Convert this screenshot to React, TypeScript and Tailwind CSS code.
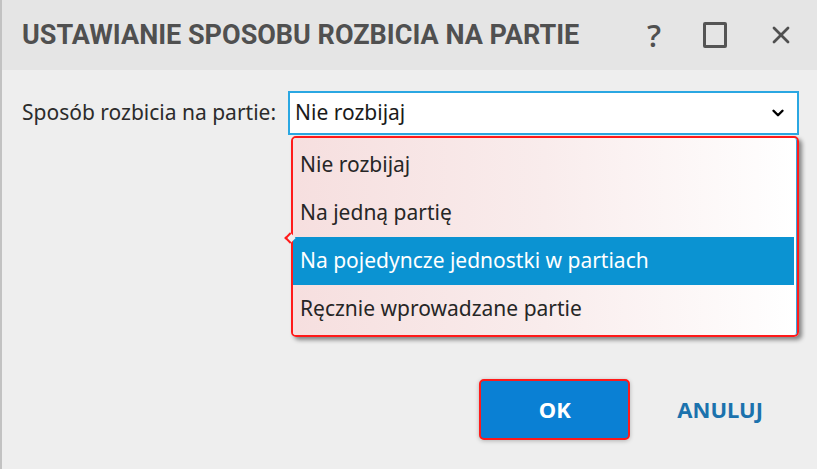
import { ChevronDown, X } from 'lucide-react';

const options = [
  'Nie rozbijaj',
  'Na jedną partię',
  'Na pojedyncze jednostki w partiach',
  'Ręcznie wprowadzane partie',
];

export default function App() {
  const selected = 2;

  return (
    <div
      className="w-[817px] h-[469px] bg-[#eeeeee] border-l-2 border-[#c2c2c2] flex flex-col overflow-hidden"
      style={{ fontFamily: '"Noto Sans", "Open Sans", sans-serif' }}
    >
      {/* Title bar */}
      <div className="h-[70px] bg-[#e5e5e5] flex items-center pl-[20px] pr-[22px] shrink-0">
        <h1
          className="flex-1 text-[27px] font-bold text-[#505050]"
          style={{ fontFamily: '"Roboto", sans-serif' }}
        >
          USTAWIANIE SPOSOBU ROZBICIA NA PARTIE
        </h1>
        <div className="flex items-center text-[#505050]">
          <span className="text-[31px] leading-none font-semibold w-[20px] text-center" style={{ fontFamily: '"Open Sans", sans-serif' }}>?</span>
          <div className="ml-[39px] w-[24px] h-[26px] border-[3px] border-[#555555] rounded-[2px]" />
          <X className="ml-[40px] w-[28px] h-[28px]" strokeWidth={2.4} />
        </div>
      </div>

      {/* Body */}
      <div className="flex-1 relative flex flex-col">
        <div className="flex items-center pl-[20px] pt-[21px]">
          <span className="text-[21px] text-[#2b2b2b] w-[266px]">Sposób rozbicia na partie:</span>
          <div className="w-[511px] h-[44px] bg-white border-2 border-[#2aa7e2] flex items-center pl-[5px] pr-[10px]">
            <span className="flex-1 text-[21px] text-[#1a1a1a]">Nie rozbijaj</span>
            <ChevronDown className="w-[18px] h-[18px] text-black" strokeWidth={3.2} />
          </div>
        </div>

        {/* Dropdown list */}
        <div className="absolute left-[289px] top-[66px] w-[508px] h-[201px] rounded-[5px] border-2 border-[#ff1a1a] shadow-[3px_3px_4px_rgba(0,0,0,0.45)]">
          <div className="absolute -left-[7px] top-[96px] w-[8px] h-[8px] border-l-2 border-b-2 border-[#ff1a1a] rotate-45 bg-[#eeeeee]" />
          <div className="h-full bg-gradient-to-r from-[#f6dfdf] via-[#f9ecec] to-white border-r border-[#3aa3dc] pt-[3px] rounded-[3px] overflow-hidden">
            {options.map((o, i) => (
              <div
                key={o}
                className={
                  i === selected
                    ? 'h-[48px] flex items-center pl-[7px] mr-[2px] bg-[#0b93d2] text-white text-[21px]'
                    : 'h-[48px] flex items-center pl-[7px] text-[#262626] text-[21px]'
                }
              >
                {o}
              </div>
            ))}
          </div>
        </div>

        {/* Buttons */}
        <div className="mt-auto flex items-center justify-end pr-[54px] pb-[29px]">
          <button className="w-[151px] h-[61px] bg-[#0a80d4] border-2 border-[#ff1a1a] rounded-[5px] text-white text-[22px] font-bold shadow-[0_1px_4px_rgba(0,0,0,0.25)]">
            OK
          </button>
          <button className="ml-[47px] text-[22px] font-bold text-[#1b72ad]">ANULUJ</button>
        </div>
      </div>
    </div>
  );
}
